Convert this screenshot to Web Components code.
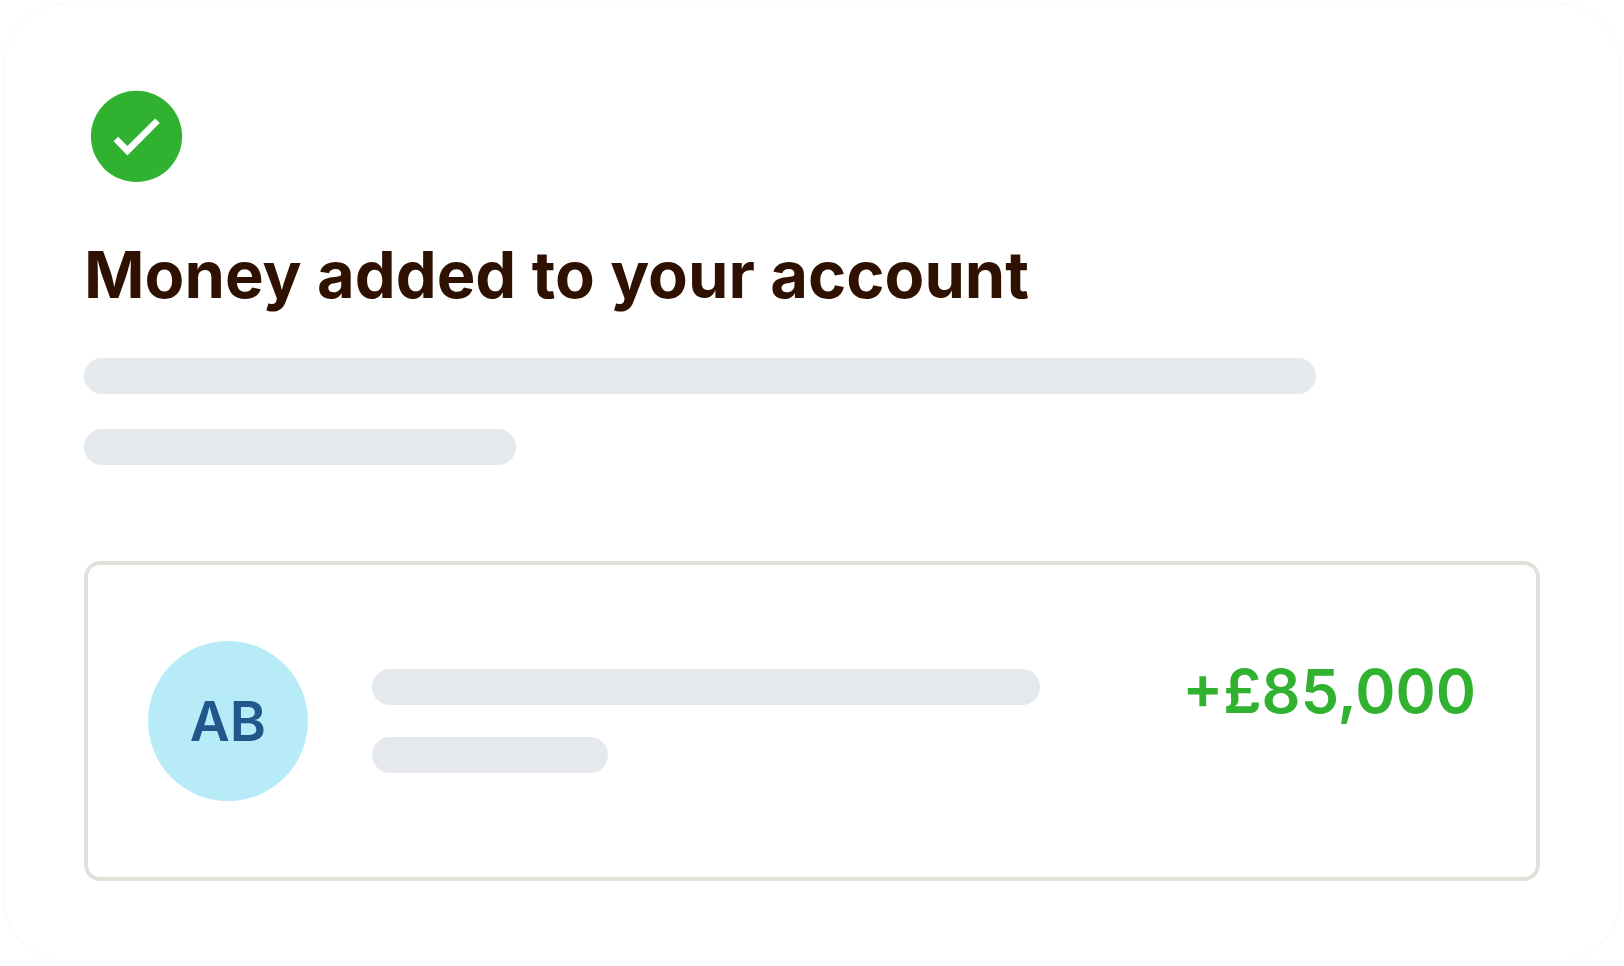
<!DOCTYPE html>
<html lang="en-GB">
<head>
<meta charset="utf-8">
<meta name="viewport" content="width=device-width, initial-scale=1">
<title>Money added to your account</title>
<style>
  body {
    margin: 0;
    background: #fff;
    color: #2e1100;
    font-family: Inter, "Liberation Sans", sans-serif;
  }
</style>
</head>
<body>
<notice-card>
  <success-icon slot="icon"></success-icon>
  <span slot="title">Money added to your account</span>
  <skeleton-lines slot="summary" style="--first: 1232px; --second: 432px; --gap: 35px"></skeleton-lines>
  <transaction-panel>
    <initials-avatar slot="avatar">AB</initials-avatar>
    <skeleton-lines slot="details" style="--first: 668px; --second: 236px; --gap: 32px"></skeleton-lines>
    <span slot="amount">+£85,000</span>
  </transaction-panel>
</notice-card>

<script>
const define = (name, html) => {
  const template = document.createElement('template');
  template.innerHTML = html;
  customElements.define(name, class extends HTMLElement {
    constructor() {
      super();
      this.attachShadow({ mode: 'open' }).append(template.content.cloneNode(true));
    }
  });
};

define('notice-card', `
  <style>
    :host {
      display: block;
      margin: 4px 4px 5px;
      padding: 80px;
      border-radius: 64px;
      background: #fff;
      box-shadow: 0 0 2px rgba(0, 0, 0, .08);
    }
    h1 { margin: 49px 0 45px; font-size: 65px; line-height: 76px; font-weight: 700; }
    .panel { margin-top: 96px; }
  </style>
  <slot name="icon"></slot>
  <h1><slot name="title"></slot></h1>
  <slot name="summary"></slot>
  <div class="panel"><slot></slot></div>
`);

define('success-icon', `
  <style>
    :host { display: block; width: 105px; height: 104px; }
    svg { display: block; }
  </style>
  <svg width="105" height="104" viewBox="84 84 105 104" role="img" aria-label="Success">
    <circle cx="136.5" cy="136.4" r="45.6" fill="#30b130"/>
    <path fill="#fff" d="M113.6 141.3 118.1 136.8 127.4 146 155.2 118.5 159.7 123 127.4 155.4Z"/>
  </svg>
`);

define('skeleton-lines', `
  <style>
    :host { display: grid; gap: var(--gap); }
    div { height: 36px; max-width: 100%; border-radius: 18px; background: #e5e9ee; }
    .first { width: var(--first); }
    .second { width: var(--second); }
  </style>
  <div class="first"></div>
  <div class="second"></div>
`);

define('transaction-panel', `
  <style>
    :host {
      display: flex;
      align-items: center;
      gap: 64px;
      padding: 76px 60px;
      border: 4px solid #e3e0da;
      border-radius: 16px;
    }
    .row { flex: 1; min-width: 0; display: flex; align-items: flex-start; gap: 32px; }
    .details { flex: 1; min-width: 0; }
    .amount { color: #30b130; font-size: 61px; line-height: 44px; font-weight: 600; white-space: nowrap; }
  </style>
  <slot name="avatar"></slot>
  <div class="row">
    <div class="details"><slot name="details"></slot></div>
    <div class="amount"><slot name="amount"></slot></div>
  </div>
`);

define('initials-avatar', `
  <style>
    :host {
      display: grid;
      place-items: center;
      flex: none;
      width: 160px;
      height: 160px;
      border-radius: 50%;
      background: #b7ebf8;
      color: #21578a;
      font-size: 55px;
      line-height: 64px;
      font-weight: 600;
    }
  </style>
  <span><slot></slot></span>
`);
</script>
</body>
</html>
